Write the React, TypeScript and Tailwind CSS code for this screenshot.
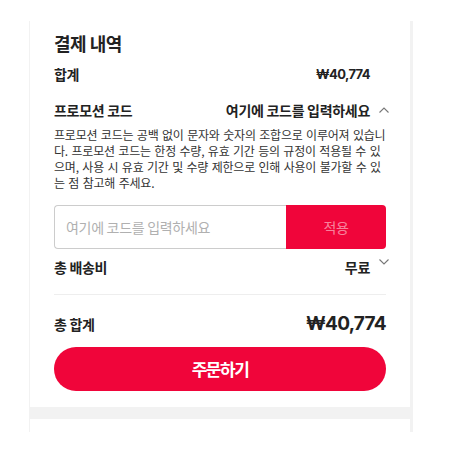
import React from 'react';

const KR = "font-['Noto_Sans_CJK_KR',sans-serif]";
const NUM = "font-['Inter','Noto_Sans_CJK_KR',sans-serif]";

const NOTICE_LINES = [
  '프로모션 코드는 공백 없이 문자와 숫자의 조합으로 이루어져 있습니',
  '다. 프로모션 코드는 한정 수량, 유효 기간 등의 규정이 적용될 수 있',
  '으며, 사용 시 유효 기간 및 수량 제한으로 인해 사용이 불가할 수 있',
  '는 점 참고해 주세요.',
];

const Chevron = ({ up }: { up?: boolean }) => (
  <svg width="10" height="6" viewBox="0 0 10 6" className="ml-[9px] -mr-[3px] shrink-0">
    <polyline
      points={up ? '0.5,5.5 5,1 9.5,5.5' : '0.5,0.5 5,5 9.5,0.5'}
      fill="none"
      stroke="#777"
      strokeWidth="1.1"
    />
  </svg>
);

export default function App() {
  return (
    <div className={`min-h-[454px] bg-white ${KR} text-[#222]`}>
      <div className="ml-[29px] mt-[21px] flex w-[384px] flex-col gap-[12px] bg-[#f2f2f2] pl-px pr-[3px]">
        <div className="bg-white px-6 pt-[9px] pb-4">
          <h2 className="text-[18px] leading-[26px] font-bold tracking-[-0.5px]">결제 내역</h2>

          <div className="mt-2 flex items-center justify-between leading-[20px]">
            <span className="text-[14px] font-bold tracking-[-0.3px]">합계</span>
            <span className={`${NUM} mr-4 text-[13px] font-bold tracking-[-0.6px]`}>₩40,774</span>
          </div>

          <div className="mt-4 flex items-center justify-between leading-[20px]">
            <span className="text-[14px] font-bold tracking-[-0.3px]">프로모션 코드</span>
            <div className="flex items-center">
              <span className="text-[14px] font-bold tracking-[-0.3px]">여기에 코드를 입력하세요</span>
              <Chevron up />
            </div>
          </div>

          <div className="mt-[7px] text-[12px] leading-[16px] tracking-[-0.2px] [word-spacing:1px] text-[#333]">
            {NOTICE_LINES.map(line => (
              <div key={line} className="whitespace-nowrap">{line}</div>
            ))}
          </div>

          <div className="mt-[14px] flex h-[44px]">
            <input
              type="text"
              placeholder="여기에 코드를 입력하세요"
              className="min-w-0 flex-1 rounded-l-[4px] border border-r-0 border-[#cccccc] px-[11px] text-[14px] tracking-[-0.3px] outline-none placeholder:text-[#b0b0b0]"
            />
            <button className="w-[100px] rounded-r-[4px] bg-[#f0053a] text-[14px] tracking-[-0.3px] text-white/50">
              적용
            </button>
          </div>

          <div className="mt-2 flex justify-between leading-[20px]">
            <span className="text-[14px] font-bold tracking-[-0.3px]">총 배송비</span>
            <div className="flex items-start">
              <span className="text-[14px] font-bold tracking-[-0.3px]">무료</span>
              <span className="mt-[2px]"><Chevron /></span>
            </div>
          </div>

          <div className="mt-[17px] h-px bg-[#eeeeee]" />

          <div className="mt-[15px] flex h-[28px] items-center justify-between">
            <span className="text-[14px] font-bold tracking-[-0.3px]">총 합계</span>
            <span className={`${NUM} text-[19px] font-bold tracking-[-0.7px]`}>₩40,774</span>
          </div>

          <button className="mt-[9px] h-[44px] w-full rounded-full bg-[#f0053a] text-[17px] font-bold tracking-[-1.5px] text-white">
            주문하기
          </button>
        </div>

        <div className="h-[13px] bg-white" />
      </div>
    </div>
  );
}
